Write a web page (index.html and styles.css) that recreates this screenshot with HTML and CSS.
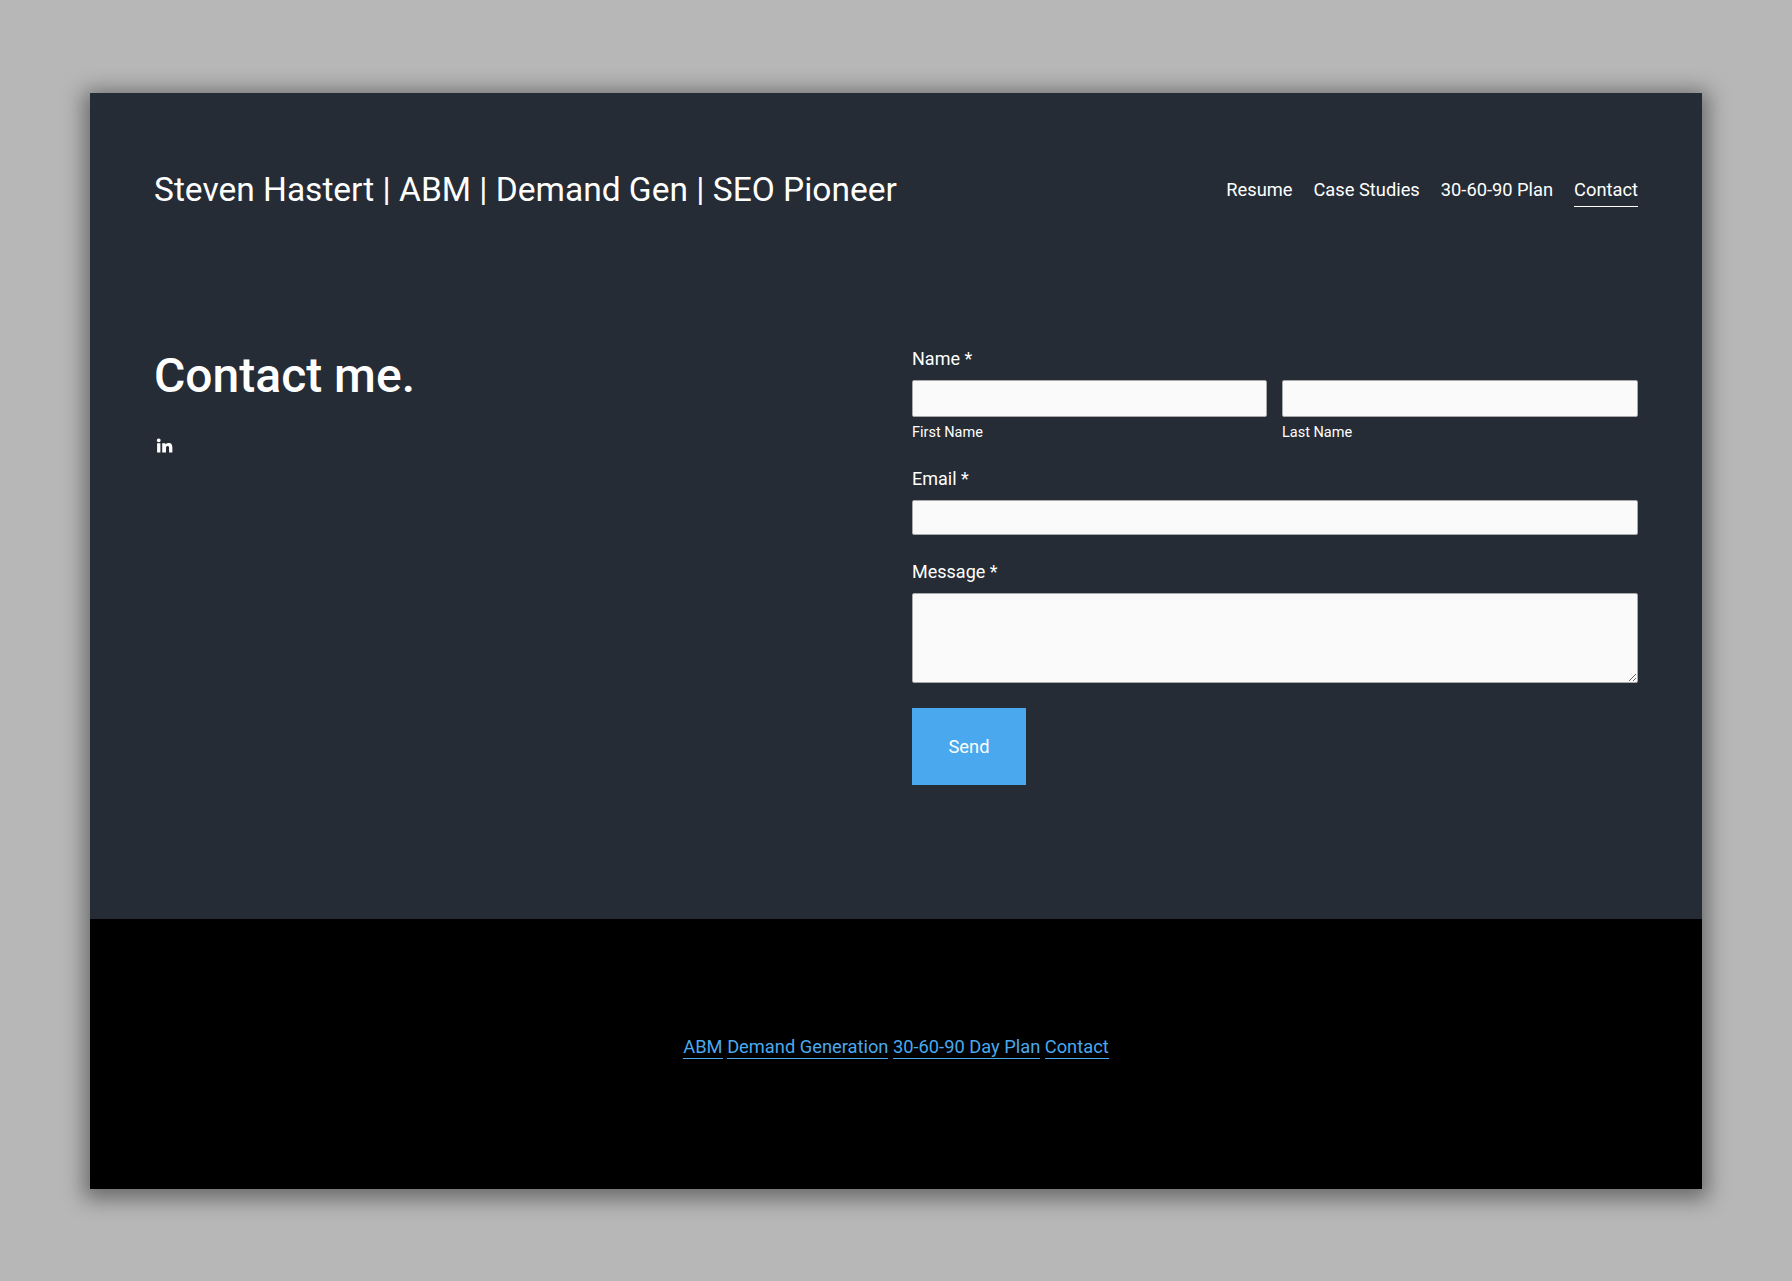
FILE: index.html
```html
<!DOCTYPE html>
<html lang="en">
<head>
    <meta charset="UTF-8">
    <title>Contact</title>
    <link rel="stylesheet" href="styles.css">
</head>
<body>
<div class="page">
    <header class="header">
        <a class="site-title" href="#">Steven Hastert | ABM | Demand Gen | SEO Pioneer</a>
        <nav class="nav">
            <a href="#">Resume</a>
            <a href="#">Case Studies</a>
            <a href="#">30-60-90 Plan</a>
            <a href="#" class="active">Contact</a>
        </nav>
    </header>
    <main class="main">
        <div class="intro">
            <h1>Contact me.</h1>
            <a href="#" class="social" aria-label="LinkedIn">
                <svg viewBox="0 0 24 24" width="18" height="18"><path fill="#fff" d="M4.98 3.2a2.6 2.6 0 1 1 0 5.2 2.6 2.6 0 0 1 0-5.2zM2.8 9.6h4.4V22H2.8zM9.6 9.6h4.2v1.8h.06c.6-1.1 2-2.2 4.1-2.2 4.4 0 5.2 2.8 5.2 6.5V22h-4.4v-5.6c0-1.4 0-3.1-1.9-3.1s-2.2 1.5-2.2 3V22H9.6z"/></svg>
            </a>
        </div>
        <form class="form">
            <div class="field">
                <div class="label">Name *</div>
                <div class="name-row">
                    <label><input type="text" class="text-input name-input"><span class="caption">First Name</span></label>
                    <label><input type="text" class="text-input name-input"><span class="caption">Last Name</span></label>
                </div>
            </div>
            <div class="field">
                <div class="label">Email *</div>
                <input type="text" class="text-input">
            </div>
            <div class="field">
                <div class="label">Message *</div>
                <textarea class="text-input message"></textarea>
            </div>
            <button type="button" class="send">Send</button>
        </form>
    </main>
    <footer class="footer">
        <a href="#">ABM</a> <a href="#">Demand Generation</a> <a href="#">30-60-90 Day Plan</a> <a href="#">Contact</a>
    </footer>
</div>
</body>
</html>
```

FILE: styles.css
```css
*{
    margin: 0;
    padding: 0;
    box-sizing: border-box;
}
html,body{
    height: 100%;
}
body{
    background: #b7b7b7;
    font-family: Roboto, "Liberation Sans", sans-serif;
    color: #fff;
    padding: 93px 90px 92px;
}
a{
    color: inherit;
    text-decoration: none;
}
.page{
    height: 1096px;
    display: flex;
    flex-direction: column;
    background: #252c35;
    box-shadow: 0 4px 20px 6px rgba(0,0,0,.42);
}
.header{
    display: flex;
    justify-content: space-between;
    align-items: center;
    padding: 50px 64px 0;
    height: 144px;
}
.site-title{
    font-size: 33.5px;
    line-height: 44px;
}
.nav{
    display: flex;
    gap: 21px;
    font-size: 18.3px;
}
.nav a{
    display: block;
    line-height: 24px;
    padding-bottom: 4px;
    border-bottom: 1px solid transparent;
    margin-top: 5px;
}
.nav .active{
    border-bottom-color: #fff;
}
.main{
    flex: 1;
    display: grid;
    grid-template-columns: 758px 726px;
    padding: 0 64px;
}
.intro h1{
    font-size: 48px;
    font-weight: 500;
    line-height: 60px;
    margin-top: birthday;
    margin-top: 109px;
}
.social{
    display: block;
    width: 18px;
    height: 18px;
    margin: 30px 0 0 1px;
}
.form{
    padding-top: 110px;
}
.field{
    margin-bottom: 25px;
}
.label{
    font-size: 18px;
    line-height: 24px;
    margin-bottom: 9px;
}
.name-row{
    display: grid;
    grid-template-columns: 355px 356px;
    gap: 15px;
}
.caption{
    display: block;
    font-size: 14.5px;
    line-height: 18px;
    margin-top: 7px;
}
.text-input{
    display: block;
    width: 100%;
    height: 35px;
    background: #fafafa;
    border: 1px solid #a9a9a9;
    border-radius: 2px;
}
.name-input{
    height: 37px;
}
.message{
    height: 90px;
    resize: vertical;
}
.send{
    display: block;
    width: 114px;
    height: 77px;
    background: #4aa8ee;
    border: 0;
    color: #fff;
    font-family: inherit;
    font-size: 18.3px;
}
.footer{
    height: 270px;
    padding-top: 115px;
    background: #000;
    text-align: center;
    font-size: 18.3px;
    line-height: 26px;
}
.footer a{
    color: #4aa8ee;
    border-bottom: 1px solid #4aa8ee;
    padding-bottom: 1px;
}
```
